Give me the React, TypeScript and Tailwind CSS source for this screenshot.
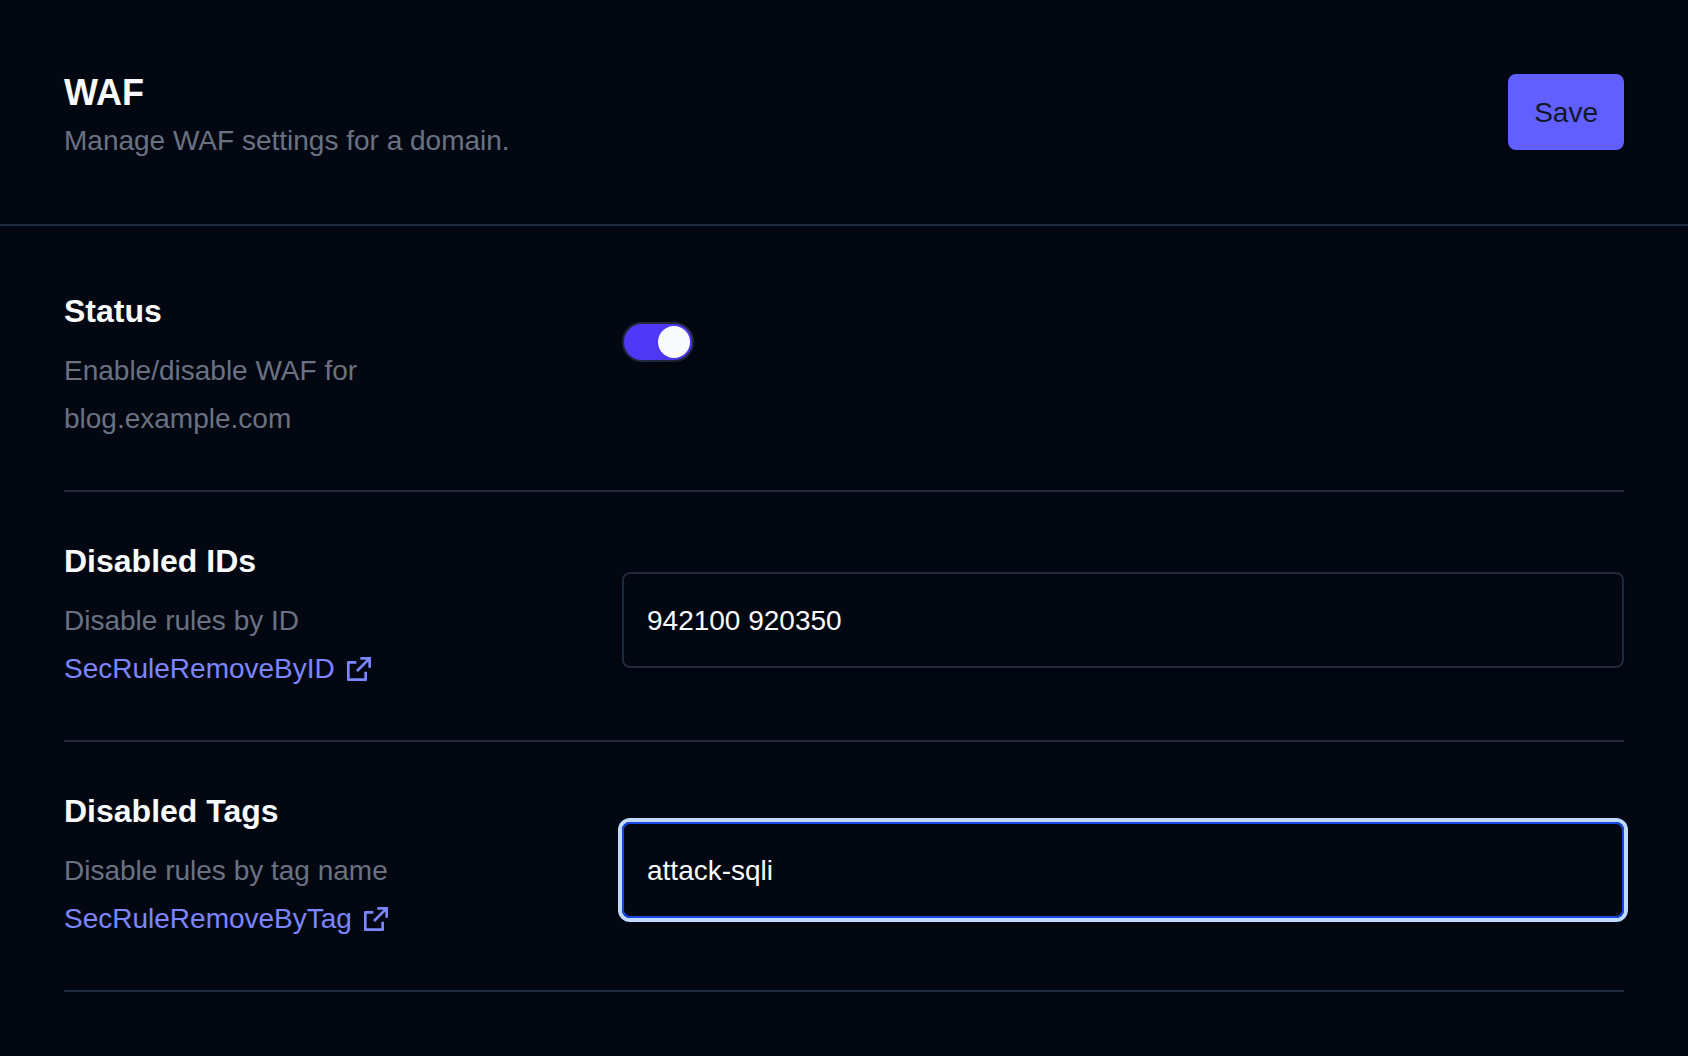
import { useState } from 'react'
import { RiExternalLinkLine } from 'react-icons/ri'

type RowProps = {
    title: string
    htmlFor: string
    description: React.ReactNode
    children: React.ReactNode
}

function DocsLink({ href, label }: { href: string; label: string }) {
    return (
        <a href={href} className="flex items-center gap-2 text-indigo-400 hover:text-indigo-300">
            {label}
            <RiExternalLinkLine className="h-8 w-8 shrink-0" aria-hidden="true" />
        </a>
    )
}

function Row({ title, htmlFor, description, children }: RowProps) {
    return (
        <div className="grid grid-cols-[510fr_1002fr] gap-12 border-b-2 border-gray-800 pt-12 pb-[47px]">
            <div className="pt-px">
                <h2 className="mb-4 text-[32px] leading-10 font-bold text-gray-50">
                    <label htmlFor={htmlFor}>{title}</label>
                </h2>
                <div className="text-[28px] leading-12 text-gray-500">{description}</div>
            </div>
            <div className="pt-8">{children}</div>
        </div>
    )
}

const inputClass =
    'block h-24 w-full rounded-lg border-2 border-gray-800 bg-transparent px-[23px] pt-0.5 text-[28px] text-gray-50 shadow-md outline-none focus:border-blue-700 focus:ring-4 focus:ring-blue-200'

export default function App() {
    const [enabled, setEnabled] = useState(true)
    const [ids, setIds] = useState('942100 920350')
    const [tags, setTags] = useState('attack-sqli')

    return (
        <form
            className="min-h-screen bg-gray-950 font-['Liberation_Sans',Arial,sans-serif]"
            onSubmit={(e) => e.preventDefault()}
        >
            <header className="flex items-center justify-between border-b-2 border-gray-800 px-16 py-[63px]">
                <div className="pt-0.5">
                    <h1 className="text-4xl leading-14 font-bold text-gray-50">WAF</h1>
                    <p className="text-[28px] leading-10 text-gray-500">Manage WAF settings for a domain.</p>
                </div>
                <button
                    type="submit"
                    className="rounded-lg border-2 border-indigo-500 bg-indigo-500 px-6 pt-[17px] pb-[15px] text-[28px] leading-10 text-gray-900 shadow-md hover:border-indigo-400 hover:bg-indigo-400"
                >
                    Save
                </button>
            </header>

            <main className="px-16 pt-4">
                <Row
                    title="Status"
                    htmlFor="status"
                    description={<p>Enable/disable WAF for blog.example.com</p>}
                >
                    <input
                        id="status"
                        type="checkbox"
                        role="switch"
                        checked={enabled}
                        onChange={(e) => setEnabled(e.target.checked)}
                        className="flex h-10 w-18 cursor-pointer appearance-none items-center rounded-full border-2 border-gray-800 bg-gray-900 p-0.5 before:size-8 before:rounded-full before:bg-gray-50 before:shadow-xl checked:justify-end checked:bg-indigo-600"
                    />
                </Row>

                <Row
                    title="Disabled IDs"
                    htmlFor="disabled-ids"
                    description={
                        <>
                            <p>Disable rules by ID</p>
                            <DocsLink href="#SecRuleRemoveByID" label="SecRuleRemoveByID" />
                        </>
                    }
                >
                    <input
                        id="disabled-ids"
                        type="text"
                        className={inputClass}
                        value={ids}
                        onChange={(e) => setIds(e.target.value)}
                    />
                </Row>

                <Row
                    title="Disabled Tags"
                    htmlFor="disabled-tags"
                    description={
                        <>
                            <p>Disable rules by tag name</p>
                            <DocsLink href="#SecRuleRemoveByTag" label="SecRuleRemoveByTag" />
                        </>
                    }
                >
                    <input
                        id="disabled-tags"
                        type="text"
                        autoFocus
                        className={inputClass}
                        value={tags}
                        onChange={(e) => setTags(e.target.value)}
                    />
                </Row>
            </main>
        </form>
    )
}
